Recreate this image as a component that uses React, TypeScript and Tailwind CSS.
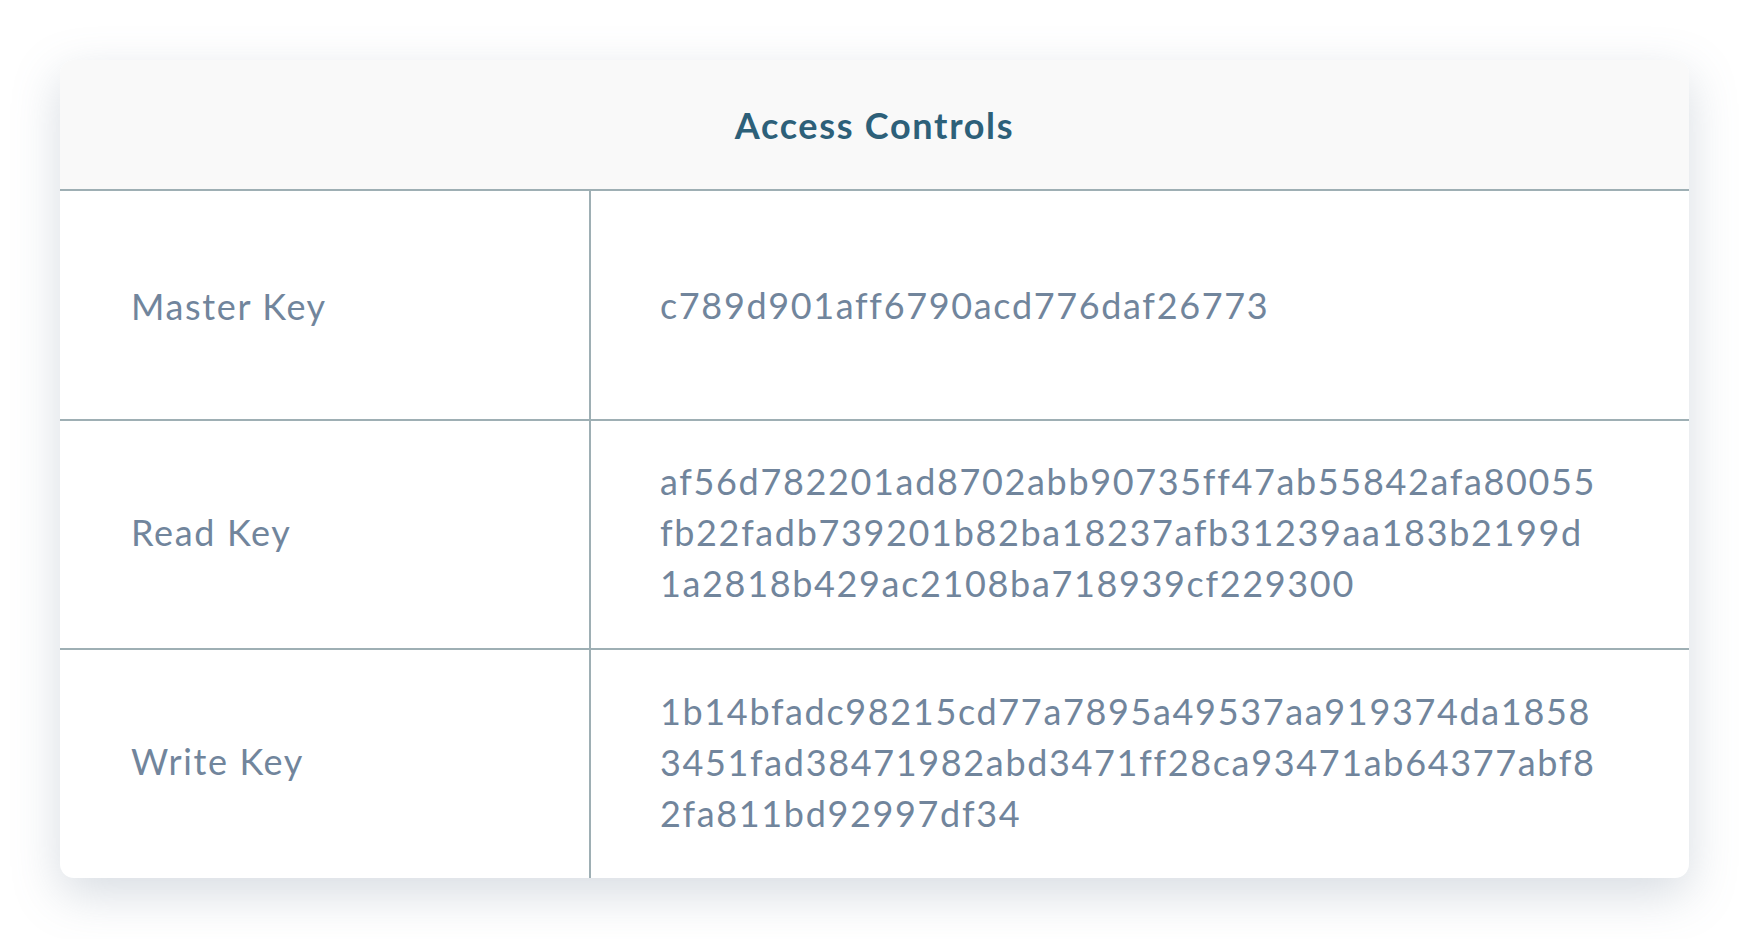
import React from "react";

const rows = [
  {
    label: "Master Key",
    rowCls: "h-[230px] shrink-0 flex border-b-2 border-[#9eafb4]",
    labelOff: "mt-[1px]",
    valueOff: "mt-0",
    lines: ["c789d901aff6790acd776daf26773"],
  },
  {
    label: "Read Key",
    rowCls: "h-[229px] shrink-0 flex border-b-2 border-[#9eafb4]",
    labelOff: "-mt-[6px]",
    valueOff: "-mt-[5px]",
    lines: [
      "af56d782201ad8702abb90735ff47ab55842afa80055",
      "fb22fadb739201b82ba18237afb31239aa183b2199d",
      "1a2818b429ac2108ba718939cf229300",
    ],
  },
  {
    label: "Write Key",
    rowCls: "flex-1 flex",
    labelOff: "-mt-[7px]",
    valueOff: "-mt-[3px]",
    lines: [
      "1b14bfadc98215cd77a7895a49537aa919374da1858",
      "3451fad38471982abd3471ff28ca93471ab64377abf8",
      "2fa811bd92997df34",
    ],
  },
];

export default function App() {
  return (
    <div
      className="w-[1749px] h-[939px] bg-white pt-[60px] pl-[60px]"
      style={{ fontFamily: "Lato, 'Noto Sans', sans-serif" }}
    >
      <div className="w-[1629px] h-[818px] rounded-[14px] bg-white overflow-hidden shadow-[0_16px_48px_rgba(110,130,150,0.28)] flex flex-col">
        <div className="h-[131px] shrink-0 bg-[#f9f9f9] border-b-2 border-[#9eafb4] flex items-center justify-center">
          <h1 className="text-[36px] font-bold text-[#2d6079] leading-none tracking-[1.7px]">
            Access Controls
          </h1>
        </div>
        {rows.map((r) => (
          <div key={r.label} className={r.rowCls}>
            <div className="w-[531px] shrink-0 border-r-2 border-[#9eafb4] flex items-center pl-[71px] text-[36px] text-[#71859c] tracking-[1.65px]">
              <span className={r.labelOff}>{r.label}</span>
            </div>
            <div className="flex-1 flex items-center pl-[69px]">
              <div
                className={`${r.valueOff} text-[36px] leading-[51px] text-[#71859c] tracking-[1.65px]`}
              >
                {r.lines.map((l) => (
                  <div key={l} className="whitespace-nowrap">
                    {l}
                  </div>
                ))}
              </div>
            </div>
          </div>
        ))}
      </div>
    </div>
  );
}
